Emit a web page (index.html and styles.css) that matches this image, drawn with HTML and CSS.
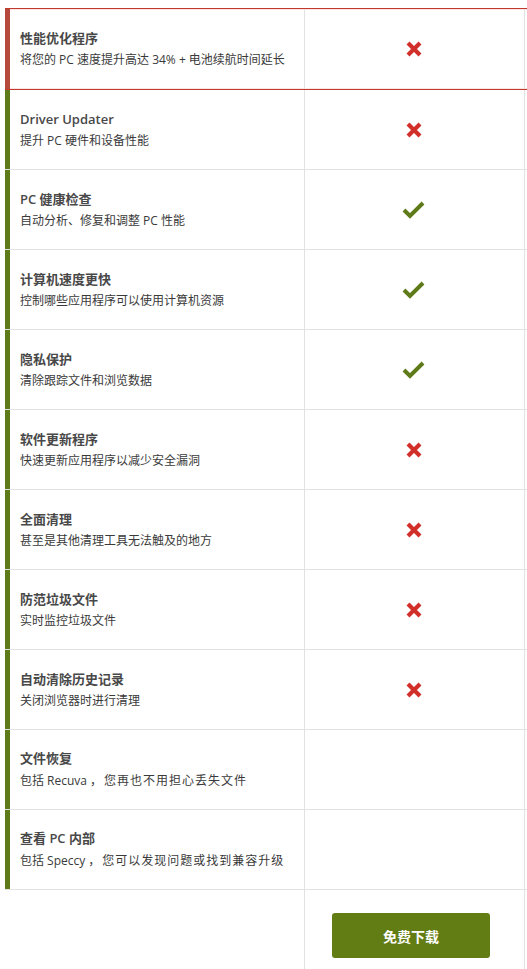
FILE: index.html
```html
<!DOCTYPE html>
<html lang="zh-CN">
<head>
<meta charset="utf-8">
<link rel="stylesheet" href="styles.css">
</head>
<body>
<div class="table">
  <div class="row hl">
    <div class="feat"><div class="t">性能优化程序</div><div class="s">将您的 PC 速度提升高达 34% + 电池续航时间延长</div></div>
    <div class="mark"><svg class="x" viewBox="0 0 18 18"><path d="M3 3L15 15M15 3L3 15"/></svg></div>
    <div class="rest"></div>
  </div>
  <div class="row">
    <div class="feat"><div class="t">Driver Updater</div><div class="s">提升 PC 硬件和设备性能</div></div>
    <div class="mark"><svg class="x" viewBox="0 0 18 18"><path d="M3 3L15 15M15 3L3 15"/></svg></div>
    <div class="rest"></div>
  </div>
  <div class="row">
    <div class="feat"><div class="t">PC 健康检查</div><div class="s">自动分析、修复和调整 PC 性能</div></div>
    <div class="mark"><svg class="ok" viewBox="0 0 24 18"><path d="M2 9L8 15L21 2"/></svg></div>
    <div class="rest"></div>
  </div>
  <div class="row">
    <div class="feat"><div class="t">计算机速度更快</div><div class="s">控制哪些应用程序可以使用计算机资源</div></div>
    <div class="mark"><svg class="ok" viewBox="0 0 24 18"><path d="M2 9L8 15L21 2"/></svg></div>
    <div class="rest"></div>
  </div>
  <div class="row">
    <div class="feat"><div class="t">隐私保护</div><div class="s">清除跟踪文件和浏览数据</div></div>
    <div class="mark"><svg class="ok" viewBox="0 0 24 18"><path d="M2 9L8 15L21 2"/></svg></div>
    <div class="rest"></div>
  </div>
  <div class="row">
    <div class="feat"><div class="t">软件更新程序</div><div class="s">快速更新应用程序以减少安全漏洞</div></div>
    <div class="mark"><svg class="x" viewBox="0 0 18 18"><path d="M3 3L15 15M15 3L3 15"/></svg></div>
    <div class="rest"></div>
  </div>
  <div class="row">
    <div class="feat"><div class="t">全面清理</div><div class="s">甚至是其他清理工具无法触及的地方</div></div>
    <div class="mark"><svg class="x" viewBox="0 0 18 18"><path d="M3 3L15 15M15 3L3 15"/></svg></div>
    <div class="rest"></div>
  </div>
  <div class="row">
    <div class="feat"><div class="t">防范垃圾文件</div><div class="s">实时监控垃圾文件</div></div>
    <div class="mark"><svg class="x" viewBox="0 0 18 18"><path d="M3 3L15 15M15 3L3 15"/></svg></div>
    <div class="rest"></div>
  </div>
  <div class="row">
    <div class="feat"><div class="t">自动清除历史记录</div><div class="s">关闭浏览器时进行清理</div></div>
    <div class="mark"><svg class="x" viewBox="0 0 18 18"><path d="M3 3L15 15M15 3L3 15"/></svg></div>
    <div class="rest"></div>
  </div>
  <div class="row">
    <div class="feat"><div class="t">文件恢复</div><div class="s">包括 Recuva<span class="cm">，</span><span class="wide">您再也不用担心丢失文件</span></div></div>
    <div class="mark"></div>
    <div class="rest"></div>
  </div>
  <div class="row">
    <div class="feat"><div class="t">查看 PC 内部</div><div class="s">包括 Speccy<span class="cm">，</span><span class="wide">您可以发现问题或找到兼容升级</span></div></div>
    <div class="mark"></div>
    <div class="rest"></div>
  </div>
  <div class="row foot">
    <div class="feat"></div>
    <div class="mark"><a class="btn" href="#">免费下载</a></div>
    <div class="rest"></div>
  </div>
</div>
</body>
</html>
```
FILE: styles.css
```css
html, body { margin: 0; padding: 0; background: #fff; overflow: hidden; }
body { padding: 8px 0 0 5px; font-family: "Open Sans", "Noto Sans CJK SC", sans-serif; color: #333; }
.table { width: 600px; }
.row { display: flex; height: 80px; box-sizing: border-box; border-bottom: 1px solid #e2e2e2; }
.row.hl { height: 82px; border-top: 1px solid #c0392b; border-bottom: 1px solid #c0392b; box-shadow: inset 0 2px 1px -1px #fbe3e3, inset 0 -2px 1px -1px #fbe3e3; }
.feat { width: 300px; box-sizing: border-box; border-left: 5px solid #5f7a19; border-right: 1px solid #e2e2e2; padding-left: 10px; display: flex; flex-direction: column; justify-content: center; }
.hl .feat { border-left-color: #b54a3c; }
.foot { height: 80px; border-bottom: none; }
.foot .feat { border-left-color: transparent; }
.t { font-size: 13px; line-height: 22px; font-weight: 600; color: #484848; }
.s { font-size: 12px; line-height: 22px; color: #3a3a3a; }
.cm { font-family: "Noto Sans CJK TC", sans-serif; margin: 0 2px 0 3px; }
.wide { letter-spacing: 1px; }
.mark { width: 220px; box-sizing: border-box; border-right: 1px solid #e2e2e2; display: flex; align-items: center; justify-content: center; padding-right: 1px; }
.rest { flex: 1; }
.x { width: 18px; height: 18px; }
.x path { stroke: #d1302a; stroke-width: 4.2; fill: none; }
.ok { width: 24px; height: 18px; }
.ok path { stroke: #5f7a18; stroke-width: 4; fill: none; }
.foot .mark { align-items: flex-start; justify-content: flex-start; padding: 23px 0 0 27px; }
.btn { display: flex; align-items: center; justify-content: center; width: 158px; height: 45px; background: #637d15; border-radius: 3px; color: #fff; font-weight: 700; font-size: 14px; text-decoration: none; }
```
